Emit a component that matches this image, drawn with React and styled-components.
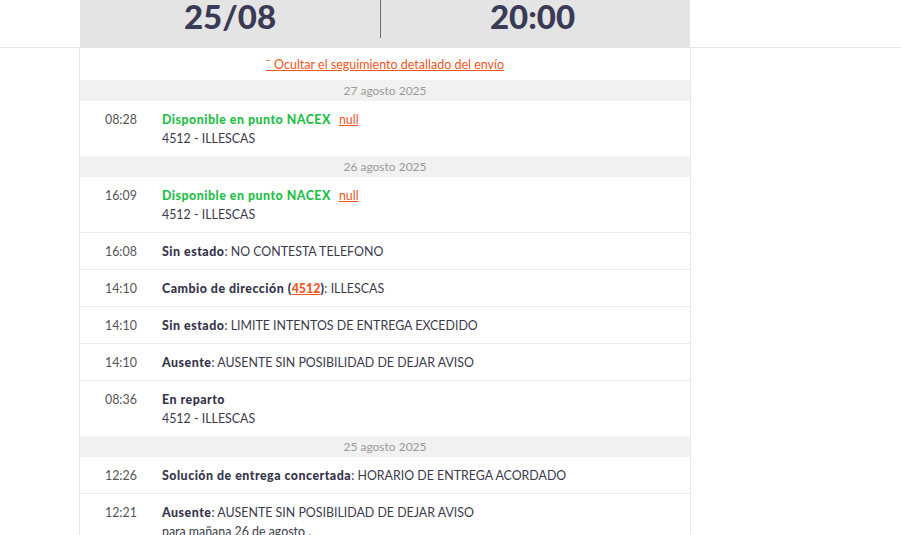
import React from "react";
import styled, { createGlobalStyle } from "styled-components";

const Global = createGlobalStyle`
  html, body { margin: 0; padding: 0; background: #fff; overflow: hidden; }
  body { font-family: Lato, "Open Sans", sans-serif; color: #3a3a4a; }
`;

const TopStrip = styled.div`
  border-bottom: 1px solid #e6e6e6;
`;

const Summary = styled.div`
  margin-left: 80px;
  width: 610px;
  height: 47px;
  background: #e4e4e4;
  display: grid;
  grid-template-columns: 300px 1fr;
`;

const SummaryCell = styled.div`
  font-family: Lato, sans-serif;
  font-weight: 900;
  font-size: 33px;
  line-height: 32px;
  color: #3b3a56;
  text-align: center;
  border-left: ${(p) => (p.$divided ? "1px solid #6e6e6e" : "none")};
  height: 38px;
  box-sizing: border-box;
  padding-right: ${(p) => (p.$divided ? "6px" : "0")};
`;

const Panel = styled.div`
  margin-left: 79px;
  width: 610px;
  border-left: 1px solid #e6e6e6;
  border-right: 1px solid #e6e6e6;
`;

const ToggleRow = styled.div`
  height: 32px;
  display: flex;
  align-items: center;
  justify-content: center;
`;

const ToggleLink = styled.a`
  color: #f0561c;
  font-size: 12.5px;
  text-decoration: underline;
  cursor: pointer;
`;

const DateRow = styled.div`
  background: #f1f1f1;
  height: 21px;
  line-height: 21px;
  text-align: center;
  font-size: 12px;
  color: #999;
`;

const Entry = styled.div`
  display: grid;
  grid-template-columns: 57px 1fr;
  padding: 9px 0 8px 25px;
  font-size: 12.4px;
  line-height: 19px;
  border-top: ${(p) => (p.$first ? "none" : "1px solid #ececec")};
`;

const Time = styled.div`
  color: #555;
`;

const Body = styled.div`
  color: #3a3a4a;
`;

const Title = styled.span`
  font-weight: 900;
  letter-spacing: 0.5px;
  color: ${(p) => (p.$green ? "#1fbf48" : "#35344a")};
`;

const Ref = styled.a`
  color: #f0561c;
  text-decoration: underline;
  font-weight: ${(p) => (p.$bold ? 900 : 400)};
  margin-left: ${(p) => (p.$gap ? "8px" : "0")};
`;

const days = [
  {
    date: "27 agosto 2025",
    entries: [
      { time: "08:28", title: "Disponible en punto NACEX", green: true, nullRef: true, sub: "4512 - ILLESCAS" },
    ],
  },
  {
    date: "26 agosto 2025",
    entries: [
      { time: "16:09", title: "Disponible en punto NACEX", green: true, nullRef: true, sub: "4512 - ILLESCAS" },
      { time: "16:08", title: "Sin estado", text: "NO CONTESTA TELEFONO" },
      { time: "14:10", title: "Cambio de dirección", code: "4512", text: "ILLESCAS" },
      { time: "14:10", title: "Sin estado", text: "LIMITE INTENTOS DE ENTREGA EXCEDIDO" },
      { time: "14:10", title: "Ausente", text: "AUSENTE SIN POSIBILIDAD DE DEJAR AVISO" },
      { time: "08:36", title: "En reparto", sub: "4512 - ILLESCAS" },
    ],
  },
  {
    date: "25 agosto 2025",
    entries: [
      { time: "12:26", title: "Solución de entrega concertada", text: "HORARIO DE ENTREGA ACORDADO" },
      { time: "12:21", title: "Ausente", text: "AUSENTE SIN POSIBILIDAD DE DEJAR AVISO", sub: "para mañana 26 de agosto ." },
    ],
  },
];

function EntryRow({ e, first }) {
  return (
    <Entry $first={first}>
      <Time>{e.time}</Time>
      <Body>
        <div>
          <Title $green={e.green}>{e.title}</Title>
          {e.nullRef && <Ref $gap>null</Ref>}
          {e.code && (
            <>
              <Title> (</Title>
              <Ref $bold>{e.code}</Ref>
              <Title>)</Title>
            </>
          )}
          {e.text && <>: {e.text}</>}
        </div>
        {e.sub && <div>{e.sub}</div>}
      </Body>
    </Entry>
  );
}

export default function App() {
  return (
    <>
      <Global />
      <TopStrip>
        <Summary>
          <SummaryCell>25/08</SummaryCell>
          <SummaryCell $divided>20:00</SummaryCell>
        </Summary>
      </TopStrip>
      <Panel>
        <ToggleRow>
          <ToggleLink>ˉ Ocultar el seguimiento detallado del envío</ToggleLink>
        </ToggleRow>
        {days.map((d) => (
          <React.Fragment key={d.date}>
            <DateRow>{d.date}</DateRow>
            {d.entries.map((e, i) => (
              <EntryRow key={i} e={e} first={i === 0} />
            ))}
          </React.Fragment>
        ))}
      </Panel>
    </>
  );
}
